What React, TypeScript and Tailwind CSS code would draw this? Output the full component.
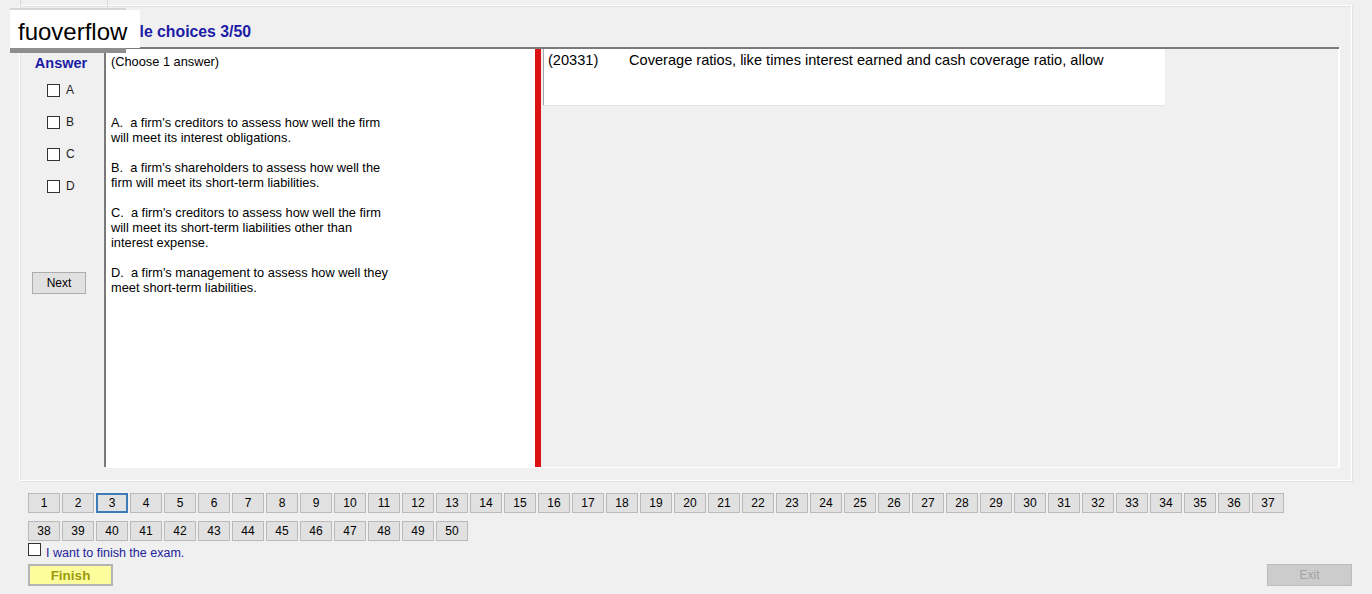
import React from "react";

const FONT = { fontFamily: '"Liberation Sans", Arial, sans-serif' };

const OPTIONS: string[][] = [
  ["A.  a firm's creditors to assess how well the firm", "will meet its interest obligations."],
  ["B.  a firm's shareholders to assess how well the", "firm will meet its short-term liabilities."],
  ["C.  a firm's creditors to assess how well the firm", "will meet its short-term liabilities other than", "interest expense."],
  ["D.  a firm's management to assess how well they", "meet short-term liabilities."],
];

function Box() {
  return <span className="inline-block w-[13px] h-[13px] bg-white border border-[#333]" />;
}

function PageBtn({ n, current }: { n: number; current?: boolean }) {
  return (
    <button
      className={`w-[32px] h-[20px] text-[12px] leading-none text-black bg-[#e1e1e1] ${
        current ? "border-2 border-[#3d7ab8]" : "border border-[#b9b9b9]"
      }`}
    >
      {n}
    </button>
  );
}

export default function App() {
  const row1 = Array.from({ length: 37 }, (_, i) => i + 1);
  const row2 = Array.from({ length: 13 }, (_, i) => i + 38);
  return (
    <div className="relative w-[1372px] h-[594px] overflow-hidden bg-[#f0f0f0] text-black" style={FONT}>
      {/* leftover of a control scrolled above */}
      <div className="absolute left-[20px] top-0 h-[8px] w-[88px] border-x border-[#dcdcdc]" />

      <div className="pt-[5px] pl-[19px]">
        <div className="w-[1333px] h-[476px] border border-white shadow-[inset_1px_1px_0_#e2e2e2,1px_1px_0_#e2e2e2] flex flex-col">
          <div className="h-[41px] pl-[73px] pt-[14px]">
            <span className="text-[15.8px] leading-[18px] font-bold text-[#1c1ca6]">Multiple choices 3/50</span>
          </div>

          <div className="flex h-[420px]">
            {/* answer column */}
            <div className="w-[84px] flex flex-col pt-[7px]">
              <div className="text-center text-[14.5px] leading-[18px] font-bold text-[#1c1ca6] pr-[2px]">Answer</div>
              <div className="mt-[2px]">
                {["A", "B", "C", "D"].map((l) => (
                  <div key={l} className="h-[32px] flex items-center pl-[27px] gap-[6px]">
                    <Box />
                    <span className="text-[12px] text-[#222]">{l}</span>
                  </div>
                ))}
              </div>
              <button className="mt-[70px] ml-[12px] w-[54px] h-[22px] bg-[#e1e1e1] border border-[#adadad] text-[12px] leading-none">
                Next
              </button>
            </div>

            {/* question area */}
            <div className="w-[1235px] h-full flex border-t-2 border-l-2 border-[#7a7a7a] shadow-[1px_1px_0_#ffffff]">
              <div className="w-[429px] h-full bg-white pl-[5px] pt-[5px] text-[12.8px] leading-[15px]">
                <div>(Choose 1 answer)</div>
                <div className="mt-[46px]">
                  {OPTIONS.map((o, i) => (
                    <div key={i} className="mb-[15px]">
                      {o.map((line, j) => (
                        <div key={j} className="whitespace-pre">{line}</div>
                      ))}
                    </div>
                  ))}
                </div>
              </div>
              <div className="w-[6px] h-full bg-[#dc1212]" />
              <div className="flex-1 h-full pl-[2px] shadow-[inset_-1px_0_0_#ffffff]">
                <div className="w-[622px] h-[56px] bg-white border-l border-[#a8a8a8] shadow-[0_1px_0_#e4e4e4] flex items-start pt-[3px] pl-[4px] text-[14.6px] leading-[16px]">
                  <span className="w-[81px]">(20331)</span>
                  <span>Coverage ratios, like times interest earned and cash coverage ratio, allow</span>
                </div>
              </div>
            </div>
          </div>
        </div>
      </div>

      {/* question navigator */}
      <div className="pl-[28px] mt-[12px] flex flex-col gap-[8px]">
        <div className="flex gap-[2px]">
          {row1.map((n) => (
            <PageBtn key={n} n={n} current={n === 3} />
          ))}
        </div>
        <div className="flex gap-[2px]">
          {row2.map((n) => (
            <PageBtn key={n} n={n} />
          ))}
        </div>
      </div>

      <div className="pl-[28px] mt-[2px] flex items-start gap-[5px] h-[14px]">
        <Box />
        <span className="mt-[3px] text-[12.5px] leading-[14px] text-[#22229a]">I want to finish the exam.</span>
      </div>

      <div className="pl-[28px] pr-[20px] mt-[7px] flex justify-between">
        <button className="w-[85px] h-[22px] bg-[#fdfd9e] border-2 border-[#b4b4b4] text-[13.5px] font-bold text-[#9b9b0c] leading-none pt-[2px]">
          Finish
        </button>
        <button className="w-[85px] h-[22px] bg-[#cccccc] border border-[#bdbdbd] text-[12px] text-[#a3a3a3] leading-none">
          Exit
        </button>
      </div>

      {/* watermark */}
      <div className="absolute left-[10px] top-[8px] w-[116px] h-[45px] bg-[#8e8e8e] border-t-2 border-[#d6d6d6]" />
      <div className="absolute left-[10px] top-[10px] w-[130px] h-[38px] bg-white pl-[8px] pt-[10px]">
        <span className="block text-[24px] leading-[24px] text-black">fuoverflow</span>
      </div>
    </div>
  );
}
